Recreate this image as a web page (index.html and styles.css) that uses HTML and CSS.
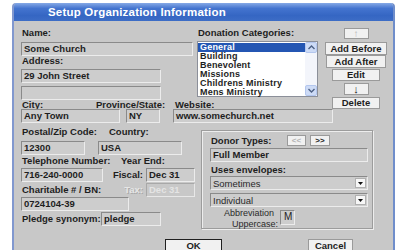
FILE: index.html
```html
<!DOCTYPE html>
<html lang="en">
<head>
    <meta charset="UTF-8">
    <title>Setup Organization Information</title>
    <link rel="stylesheet" href="styles.css">
</head>
<body>

<div class="window">
    <div class="title-bar">Setup Organization Information</div>

    <div class="dialog">
        <!-- Top: name/address + donation categories -->
        <div class="top">
            <div class="top-main">
                <div class="top-cols">
                    <div class="col-fields">
                        <div class="label">Name:</div>
                        <div class="field name-field">Some Church</div>
                        <div class="label">Address:</div>
                        <div class="field addr-field">29 John Street</div>
                        <div class="field addr-field addr-second"></div>
                    </div>
                    <div class="col-categories">
                        <div class="label">Donation Categories:</div>
                        <div class="listbox">
                            <ul class="list-items">
                                <li class="selected">General</li>
                                <li>Building</li>
                                <li>Benevolent</li>
                                <li>Missions</li>
                                <li>Childrens Ministry</li>
                                <li>Mens Ministry</li>
                            </ul>
                            <div class="scrollbar">
                                <span class="scroll-btn">
                                    <svg width="7" height="5" viewBox="0 0 7 5"><path d="M0.5 4 L3.5 1 L6.5 4" fill="none" stroke="#4d6185" stroke-width="1.4"/></svg>
                                </span>
                                <span class="scroll-track"></span>
                                <span class="scroll-btn">
                                    <svg width="7" height="5" viewBox="0 0 7 5"><path d="M0.5 1 L3.5 4 L6.5 1" fill="none" stroke="#4d6185" stroke-width="1.4"/></svg>
                                </span>
                            </div>
                        </div>
                    </div>
                </div>
                <div class="city-labels">
                    <span class="label city-label">City:</span>
                    <span class="label prov-label">Province/State:</span>
                    <span class="label">Website:</span>
                </div>
            </div>

            <div class="cat-buttons">
                <button class="btn arrow-btn is-disabled">&#8593;</button>
                <button class="btn before-btn">Add Before</button>
                <button class="btn after-btn">Add After</button>
                <button class="btn edit-btn">Edit</button>
                <button class="btn arrow-btn down-btn">&#8595;</button>
                <button class="btn edit-btn delete-btn">Delete</button>
            </div>
        </div>

        <div class="city-inputs">
            <div class="field town-field">Any Town</div>
            <div class="field state-field">NY</div>
            <div class="field web-field">www.somechurch.net</div>
        </div>

        <!-- Lower: contact fields + donor group -->
        <div class="lower">
            <div class="lower-left">
                <div class="label-row first-row">
                    <span class="label postal-label">Postal/Zip Code:</span>
                    <span class="label">Country:</span>
                </div>
                <div class="input-row postal-inputs">
                    <div class="field zip-field">12300</div>
                    <div class="field country-field">USA</div>
                </div>
                <div class="label-row tel-labels">
                    <span class="label tel-label">Telephone Number:</span>
                    <span class="label">Year End:</span>
                </div>
                <div class="input-row phone-row">
                    <div class="field phone-field">716-240-0000</div>
                    <span class="label side-label">Fiscal:</span>
                    <div class="field date-field">Dec 31</div>
                </div>
                <div class="input-row charity-row">
                    <span class="label charity-label">Charitable # / BN:</span>
                    <span class="label side-label tax-label">Tax:</span>
                    <div class="field date-field is-disabled">Dec 31</div>
                </div>
                <div class="field charity-field">0724104-39</div>
                <div class="input-row pledge-row">
                    <span class="label pledge-label">Pledge synonym:</span>
                    <div class="field pledge-field">pledge</div>
                </div>
            </div>

            <div class="group">
                <div class="donor-row">
                    <span class="label donor-label">Donor Types:</span>
                    <button class="btn nav-btn is-disabled">&lt;&lt;</button>
                    <button class="btn nav-btn next-btn">&gt;&gt;</button>
                </div>
                <div class="field group-field">Full Member</div>
                <div class="label envelope-label">Uses envelopes:</div>
                <div class="select first-select">
                    <span class="select-text">Sometimes</span>
                    <span class="select-btn"><svg width="5" height="3" viewBox="0 0 5 3"><path d="M0 0 H5 L2.5 3 Z" fill="#111"/></svg></span>
                </div>
                <div class="select second-select">
                    <span class="select-text">Individual</span>
                    <span class="select-btn"><svg width="5" height="3" viewBox="0 0 5 3"><path d="M0 0 H5 L2.5 3 Z" fill="#111"/></svg></span>
                </div>
                <div class="abbrev-row">
                    <span class="abbrev-label"><span class="abbrev-first">Abbreviation</span><br>Uppercase:</span>
                    <div class="field abbrev-field">M</div>
                </div>
            </div>
        </div>

        <div class="actions">
            <button class="btn ok-btn">OK</button>
            <button class="btn cancel-btn">Cancel</button>
        </div>
    </div>
</div>

</body>
</html>
```

FILE: styles.css
```css
/* Reset */
*,
*::before,
*::after {
    box-sizing: border-box;
    margin: 0;
    padding: 0;
}

:root {
    --dialog-bg: #c8c8c8;
    --field-bg: #cdcdcd;
    --text-main: #1e1e1e;
    --border-dark: #8a8a8a;
    --border-light: #ececec;
}

body {
    background: #ffffff;
    font-family: "Liberation Sans", Arial, sans-serif;
    font-size: 9.5px;
    font-weight: bold;
    color: var(--text-main);
    overflow: hidden;
}

/* --- Window frame --- */
.window {
    margin: 3px 0 0 12px;
    width: 383px;
    height: 260px;
    background: var(--dialog-bg);
    border-left: 2px solid #8198cf;
    border-right: 2px solid #6f8dca;
    border-radius: 4px 4px 0 0;
    overflow: hidden;
}

.title-bar {
    height: 18px;
    padding-left: 34px;
    background: linear-gradient(#86a9e6, #4474cf 30%, #3566c3 70%, #3d6dc6);
    color: #ffffff;
    font-size: 11.5px;
    line-height: 18px;
    letter-spacing: 0.2px;
}

.dialog {
    padding: 7px 0 0 7px;
}

/* --- Common controls --- */
.label {
    display: block;
    height: 10px;
    line-height: 10px;
    padding-left: 1px;
    white-space: nowrap;
}

.field {
    height: 14px;
    padding-left: 2px;
    background: var(--field-bg);
    border: 1px solid;
    border-color: var(--border-dark) var(--border-light) var(--border-light) var(--border-dark);
    line-height: 12px;
    white-space: nowrap;
    overflow: hidden;
}

.field.is-disabled {
    color: #e4e4e4;
    background: var(--dialog-bg);
    border-color: #a8a8a8 #e8e8e8 #e8e8e8 #a8a8a8;
}

.btn {
    display: block;
    background: #f1f1f1;
    border: 1px solid #9a9a9a;
    font-family: inherit;
    font-size: 9.5px;
    font-weight: bold;
    color: var(--text-main);
    line-height: 10px;
    text-align: center;
}

.btn.is-disabled {
    color: #b4b4b4;
}

/* --- Top section --- */
.top {
    display: flex;
    align-items: flex-start;
}

.top-main {
    width: 297px;
}

.top-cols {
    display: flex;
    align-items: flex-start;
}

.col-fields {
    width: 172px;
}

.name-field {
    margin-top: 4px;
}

.addr-field {
    width: 140px;
    margin-top: 3px;
}

.col-categories {
    width: 121px;
    margin-left: 4px;
}

.listbox {
    display: flex;
    height: 56px;
    margin-top: 3px;
    background: #ffffff;
    border: 1px solid #8b8f99;
}

.list-items {
    flex: 1;
    list-style: none;
    padding-top: 1px;
}

.list-items li {
    height: 9px;
    font-size: 9px;
    line-height: 9px;
    letter-spacing: 0.2px;
    padding-left: 2px;
    white-space: nowrap;
    overflow: hidden;
}

.list-items li.selected {
    background: #2456b3;
    color: #ffffff;
}

.scrollbar {
    display: flex;
    flex-direction: column;
    width: 12px;
    background: #f3f5fb;
}

.scroll-btn {
    display: flex;
    align-items: center;
    justify-content: center;
    height: 11px;
    background: #cddbf6;
    border: 1px solid #b3c6ee;
    border-radius: 2px;
}

.scroll-track {
    flex: 1;
}

.city-labels {
    display: flex;
}

.city-labels .label {
    height: 9px;
    line-height: 9px;
}

.city-label {
    width: 74px;
}

.prov-label {
    width: 79px;
}

.cat-buttons {
    display: flex;
    flex-direction: column;
    align-items: center;
    width: 62px;
    margin-left: 7px;
}

.arrow-btn {
    width: 25px;
    height: 11px;
    font-size: 10px;
    line-height: 9px;
}

.before-btn {
    width: 62px;
    height: 13px;
    margin-top: 3px;
}

.after-btn {
    width: 60px;
    height: 13px;
}

.edit-btn {
    width: 48px;
    height: 12px;
    margin-top: 1px;
}

.down-btn {
    height: 12px;
    margin-top: 2px;
    font-size: 11px;
}

.delete-btn {
    margin-top: 2px;
}

/* --- City row --- */
.city-inputs {
    display: flex;
}

.town-field {
    width: 99px;
}

.state-field {
    width: 34px;
    margin-left: 6px;
}

.web-field {
    width: 160px;
    margin-left: 13px;
}

/* --- Lower section --- */
.lower {
    display: flex;
    align-items: flex-start;
}

.lower-left {
    width: 174px;
}

.label-row,
.input-row {
    display: flex;
    align-items: center;
}

.first-row {
    margin-top: 4px;
}

.postal-label {
    width: 87px;
}

.postal-inputs {
    margin-top: 4px;
}

.zip-field {
    width: 64px;
}

.country-field {
    width: 84px;
    margin-left: 13px;
}

.tel-labels {
    margin-top: 1px;
}

.tel-label {
    width: 99px;
}

.phone-row {
    margin-top: 2px;
}

.phone-field {
    width: 82px;
}

.side-label {
    width: 42px;
    padding-right: 2px;
    text-align: right;
}

.date-field {
    width: 49px;
    margin-left: 1px;
}

.charity-row {
    margin-top: 1px;
}

.charity-label {
    width: 82px;
}

.tax-label {
    color: #e6e6e6;
    text-shadow: 1px 1px 0 #a9a9a9;
}

.charity-field {
    width: 108px;
}

.pledge-row {
    margin-top: 1px;
}

.pledge-label {
    width: 80px;
}

.pledge-field {
    width: 60px;
}

/* Donor group box */
.group {
    width: 172px;
    height: 99px;
    margin: 7px 0 0 6px;
    padding: 4px 0 0 8px;
    border: 1px solid #9c9c9c;
    box-shadow: inset 1px 1px 0 #ededed, 1px 1px 0 #ededed;
}

.donor-row {
    display: flex;
    align-items: center;
    height: 11px;
}

.donor-label {
    width: 77px;
}

.nav-btn {
    width: 19px;
    height: 11px;
    font-size: 8px;
    line-height: 9px;
}

.next-btn {
    width: 20px;
    margin-left: 4px;
}

.group-field {
    width: 158px;
    margin-top: 2px;
}

.envelope-label {
    margin-top: 3px;
}

.select {
    display: flex;
    align-items: center;
    justify-content: space-between;
    width: 158px;
    height: 14px;
    background: var(--field-bg);
    border: 1px solid;
    border-color: var(--border-dark) var(--border-light) var(--border-light) var(--border-dark);
}

.first-select {
    margin-top: 1px;
}

.second-select {
    margin-top: 3px;
}

.select-text {
    padding-left: 2px;
    font-weight: normal;
    color: #2a2a2a;
}

.select-btn {
    display: flex;
    align-items: center;
    justify-content: center;
    width: 11px;
    height: 10px;
    margin-right: 1px;
    background: #f7f7f7;
    border: 1px solid #b0b0b0;
}

.abbrev-row {
    display: flex;
    align-items: flex-start;
    margin-top: 1px;
}

.abbrev-label {
    width: 68px;
    font-size: 9px;
    font-weight: normal;
    line-height: 10.5px;
    text-align: right;
    color: #2a2a2a;
}

.abbrev-first {
    padding-right: 4px;
}

.abbrev-field {
    width: 15px;
    height: 15px;
    margin: 2px 0 0 2px;
    padding-left: 3px;
    font-weight: normal;
    font-size: 10px;
}

/* --- Dialog buttons --- */
.actions {
    display: flex;
    margin-top: 10px;
}

.ok-btn {
    width: 57px;
    height: 14px;
    margin-left: 144px;
    border-color: #202020;
}

.cancel-btn {
    width: 45px;
    height: 14px;
    margin-left: 86px;
}
```
